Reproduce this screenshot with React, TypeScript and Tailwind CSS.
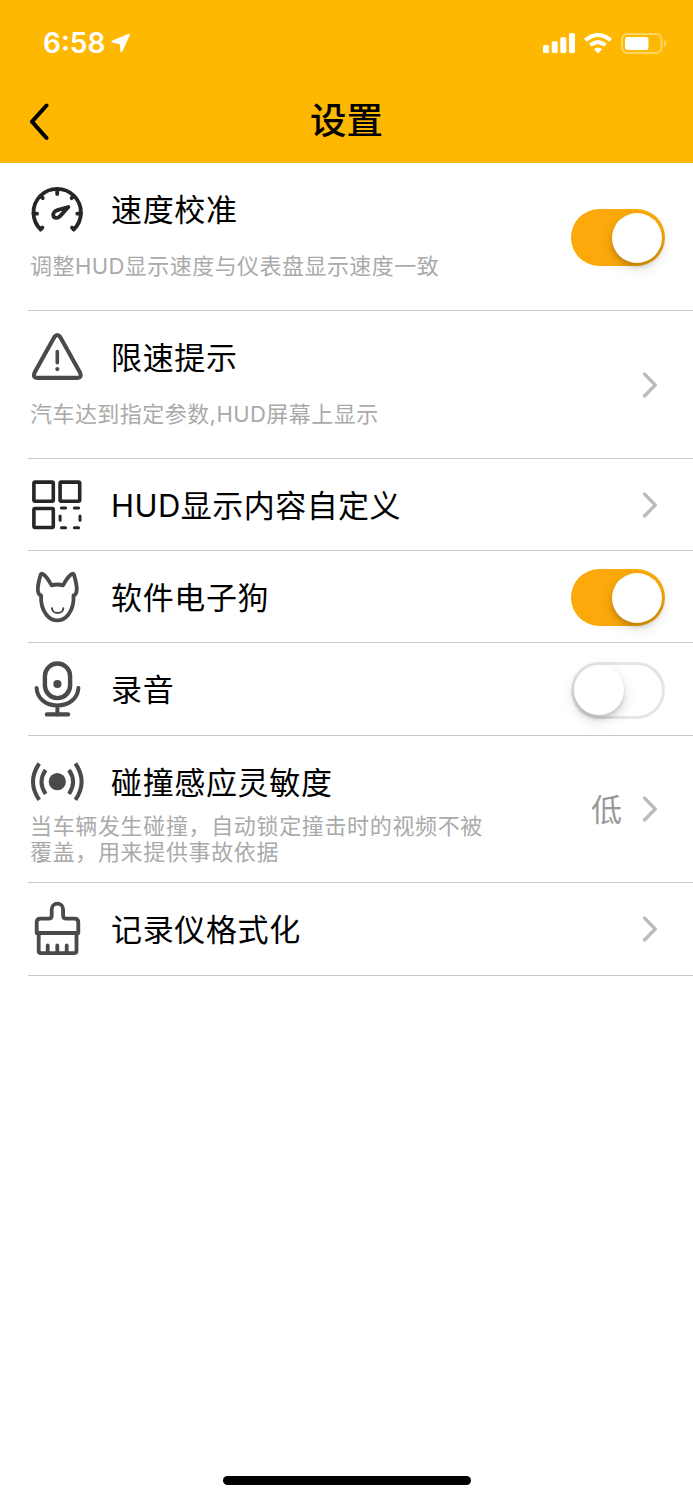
import type { ReactNode } from "react";

const ICONS: Record<string, ReactNode> = {
  gauge: (
    <g stroke="#262628" strokeWidth="3.8">
      <path d="M12.6 50.4a23.7 23.7 0 1 1 33.2 0" />
      <path d="M29.2 10v5M5.5 34.7h3.6M49.3 34.7h3.6M12.8 17.2l2 2M45.6 17.2l-2 2M12.6 50.4l1.8-1.8M45.8 50.4L44 48.6" />
      <path d="M40.4 28l-10.2 2.9c-3.8 1.2-5.6 3.5-4.8 6 .8 2.5 4.2 2.8 6.7.2z" />
    </g>
  ),
  warning: (
    <>
      <path d="M26.4 9.9q2.9-3.6 5.8 0L52 45.6q2.2 5.3-2.6 5.3H9.2q-4.8 0-2.6-5.3z" strokeWidth="4.1" />
      <path d="M29.3 24.5v11.2" strokeWidth="3.6" />
      <circle cx="29.3" cy="42.1" r="2.1" fill="#4a4a4a" stroke="none" />
    </>
  ),
  grid: (
    <g stroke="#262628" strokeWidth="3.6">
      <rect x="5.9" y="7.1" width="19.4" height="19.2" rx="1.2" />
      <rect x="32.1" y="7.1" width="19.6" height="19.2" rx="1.2" />
      <rect x="5.9" y="33.5" width="19.4" height="19" rx="1.2" />
      <path d="M33.4 33h4.2M46.4 33h4.2M33.4 52.8h4.2M46.4 52.8h4.2M32.1 41v4.2M52 41v4.2" strokeWidth="3" />
    </g>
  ),
  dog: (
    <>
      <path
        d="M23.6 18.4C21 13.5 18 9 14.6 6.9c-1.2-.6-1.8 0-2.1 1.2-1.9 6.4-2.9 11.6-2.6 15.4.2 2 .8 3.4 1.8 4.5l1.4.4c-.5 8 1.6 14.6 5.3 19.3 3 3.8 6.8 5.7 10.9 5.7s7.900-1.900 10.900-5.700c3.700-4.700 5.800-11.300 5.300-19.300l1.400-.4c1-1.100 1.600-2.500 1.800-4.500.3-3.800-.7-9-2.600-15.400-.3-1.200-.9-1.800-2.100-1.200-3.400 2.100-6.400 6.600-9 11.500-4-1.300-7.400-1.300-11.400 0z"
        strokeWidth="3.8"
      />
      <path d="M24 41.2c.3 6.4 11 6.4 11.3 0" strokeWidth="2" />
    </>
  ),
  mic: (
    <>
      <rect x="16.9" y="4.5" width="25.2" height="34.6" rx="12.6" strokeWidth="4.4" />
      <circle cx="29.4" cy="25" r="4.1" fill="#4a4a4a" stroke="none" />
      <path d="M8.6 29c.5 10.4 9.2 17.4 20.8 17.4S49.9 39.4 50.4 29M29.4 46.4v9" strokeWidth="4" />
      <path d="M19 55.4h21" strokeWidth="4.4" />
    </>
  ),
  signal: (
    <g strokeLinecap="butt" strokeWidth="4">
      <circle cx="29.3" cy="29.7" r="8.6" fill="#4a4a4a" stroke="none" />
      <path d="M17.6 18q-8.2 11.7 0 24M41 18q8.2 11.7 0 24" />
      <path d="M11.2 11.5q-12.4 18.2 0 36.4M47.4 11.5q12.4 18.2 0 36.4" />
    </g>
  ),
  brush: (
    <g strokeWidth="3.8">
      <path d="M8.7 34V23.3q0-3.7 3.7-3.7h8.1q3.2 0 3.2-3.2v-6a5.7 5.7 0 0 1 11.4 0v6q0 3.2 3.2 3.2h8.3q3.7 0 3.7 3.7V34z" />
      <path d="M10.7 34v17.7q0 2.4 2.4 2.4h33q2.4 0 2.4-2.4V34M19.7 46.5V53M29.3 46.5V53M38.7 46.5V53" />
    </g>
  ),
};

type Item = {
  icon: string;
  title: string;
  note?: string[];
  height: string;
  on?: boolean;
  value?: string;
};

const ITEMS: Item[] = [
  { icon: "gauge", title: "速度校准", note: ["调整HUD显示速度与仪表盘显示速度一致"], height: "h-[148px]", on: true },
  { icon: "warning", title: "限速提示", note: ["汽车达到指定参数,HUD屏幕上显示"], height: "h-[148px]" },
  { icon: "grid", title: "HUD显示内容自定义", height: "h-[92px]" },
  { icon: "dog", title: "软件电子狗", height: "h-[92px]", on: true },
  { icon: "mic", title: "录音", height: "h-[93px]", on: false },
  {
    icon: "signal",
    title: "碰撞感应灵敏度",
    note: ["当车辆发生碰撞，自动锁定撞击时的视频不被", "覆盖，用来提供事故依据"],
    height: "h-[147px]",
    value: "低",
  },
  { icon: "brush", title: "记录仪格式化", height: "h-[93px]" },
];

// the icon line sits higher when a note follows it
function headHeight(item: Item) {
  if (!item.note) return "h-[92px]";
  return item.note.length === 2 ? "h-[77px] pt-[15px]" : "h-[90px] pt-[2px]";
}

// Latin capitals run wide beside the hanzi, so mixed lines are set tighter
function tracking(text: string) {
  return text.includes("HUD") ? "tracking-[0.45px]" : "tracking-[0.65px]";
}

function Switch({ on }: { on: boolean }) {
  return (
    <button
      role="switch"
      aria-checked={on}
      className={`mt-[2px] flex h-[57px] w-[94px] items-center rounded-full ${
        on ? "justify-end bg-[#fda90b] pr-[3.5px]" : "justify-start border-[3.5px] border-[#e5e5e5] bg-white"
      }`}
    >
      <span className="size-[50px] rounded-full bg-white shadow-[0_5px_14px_rgba(0,0,0,0.15),0_4px_4px_rgba(0,0,0,0.12)]" />
    </button>
  );
}

function StatusBar() {
  return (
    <div className="flex h-[80px] items-center justify-between pt-[6px] pr-[26px] pl-[43px] text-white">
      <div className="flex items-center gap-[6px]">
        <span className="text-[28px] leading-none font-semibold">6:58</span>
        <svg
          width="20"
          height="20"
          viewBox="0 0 20 20"
          fill="currentColor"
          stroke="currentColor"
          strokeWidth="2"
          strokeLinejoin="round"
        >
          <path d="M18 1.6L1.4 8.6l8.4 1.8.6 7.8z" />
        </svg>
      </div>
      <div className="flex items-center gap-[9px]">
        <svg width="32" height="20" viewBox="0 0 32 20" fill="currentColor">
          <rect y="12" width="6" height="8" rx="1.5" />
          <rect x="8.7" y="8.3" width="6" height="11.7" rx="1.5" />
          <rect x="17.3" y="4.2" width="6" height="15.8" rx="1.5" />
          <rect x="26" width="6" height="20" rx="1.5" />
        </svg>
        <svg width="28" height="21" viewBox="0 0 28 21" fill="none" stroke="currentColor" strokeWidth="4">
          <path d="M1.4 7.3Q14-3.4 26.6 7.3" />
          <path d="M6.4 12.2q7.6-6.2 15.2 0" />
          <path d="M9.9 16.3q4.1-3.4 8.2 0L14 20.4z" fill="currentColor" stroke="none" />
        </svg>
        <svg width="46" height="21" viewBox="0 0 46 21">
          <rect x="1" y="1" width="39.5" height="19" rx="5.5" fill="none" stroke="#fff" strokeOpacity=".4" strokeWidth="2" />
          <rect x="4" y="4" width="23.5" height="13" rx="2.5" fill="#fff" />
          <path d="M43 7q2.2 1.2 2.2 3.5T43 14z" fill="#fff" fillOpacity=".4" />
        </svg>
      </div>
    </div>
  );
}

export default function App() {
  return (
    <div className="flex h-[1500px] w-[693px] flex-col bg-white font-['Inter','Noto_Sans_CJK_SC',sans-serif]">
      <header className="h-[163px] bg-[#ffb802]">
        <StatusBar />
        <div className="grid h-[83px] grid-cols-[100px_1fr_100px] items-center">
          <button aria-label="返回" className="pl-[28px]">
            <svg
              width="22"
              height="38"
              viewBox="0 0 22 38"
              fill="none"
              stroke="#000"
              strokeWidth="4"
              strokeLinecap="round"
              strokeLinejoin="round"
            >
              <path d="M18.5 2.5L4 18.700 18.500 35" />
            </svg>
          </button>
          <h1 className="text-center text-[36.5px] leading-none font-medium text-black">设置</h1>
        </div>
      </header>

      <main className="flex-1 pl-[28px]">
        {ITEMS.map((item) => (
          <section
            key={item.title}
            className={`flex items-center justify-between border-b border-[#c8c8c8] pr-[28px] ${item.height}`}
          >
            <div className="h-full">
              <div className={`flex items-center gap-[23px] ${headHeight(item)}`}>
                <svg
                  width="60"
                  height="60"
                  viewBox="0 0 60 60"
                  fill="none"
                  stroke="#4a4a4a"
                  strokeLinecap="round"
                  strokeLinejoin="round"
                  className="shrink-0"
                >
                  {ICONS[item.icon]}
                </svg>
                <h2 className={`text-[31px] leading-none whitespace-nowrap text-black ${tracking(item.title)}`}>
                  {item.title}
                </h2>
              </div>
              {item.note?.map((line) => (
                <p key={line} className={`pl-[2px] text-[22px] leading-[26px] whitespace-nowrap text-[#aaa] ${tracking(line)}`}>
                  {line}
                </p>
              ))}
            </div>

            {item.on !== undefined ? (
              <Switch on={item.on} />
            ) : (
              <div className="flex items-center gap-[19px] pr-[6px]">
                {item.value && <span className="text-[31px] leading-none text-[#999]">{item.value}</span>}
                <svg
                  width="18"
                  height="30"
                  viewBox="0 0 18 30"
                  fill="none"
                  stroke="#bbb"
                  strokeWidth="3.3"
                  strokeLinecap="round"
                  strokeLinejoin="round"
                >
                  <path d="M3.5 4l10.8 11L3.5 26" />
                </svg>
              </div>
            )}
          </section>
        ))}
      </main>

      <footer className="flex h-[24px] justify-center">
        <div className="h-[9px] w-[248px] rounded-full bg-black" />
      </footer>
    </div>
  );
}
